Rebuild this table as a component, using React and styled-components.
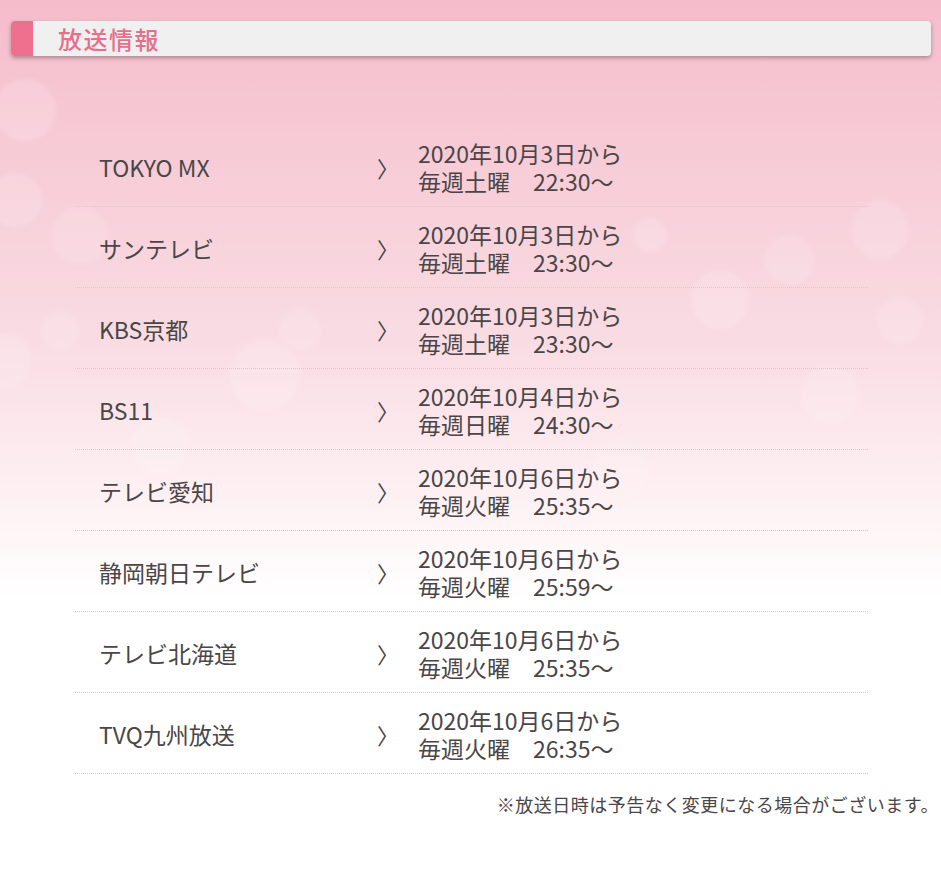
import React from 'react'
import styled, { createGlobalStyle } from 'styled-components';

const schedule = [
  { name: 'TOKYO MX', start: '2020年10月3日から', time: '毎週土曜　22:30〜' },
  { name: 'サンテレビ', start: '2020年10月3日から', time: '毎週土曜　23:30〜' },
  { name: 'KBS京都', start: '2020年10月3日から', time: '毎週土曜　23:30〜' },
  { name: 'BS11', start: '2020年10月4日から', time: '毎週日曜　24:30〜' },
  { name: 'テレビ愛知', start: '2020年10月6日から', time: '毎週火曜　25:35〜' },
  { name: '静岡朝日テレビ', start: '2020年10月6日から', time: '毎週火曜　25:59〜' },
  { name: 'テレビ北海道', start: '2020年10月6日から', time: '毎週火曜　25:35〜' },
  { name: 'TVQ九州放送', start: '2020年10月6日から', time: '毎週火曜　26:35〜' },
];

function App() {
  return (
    <>
      <GlobalStyle />
      <StyledPage>
        <TitleBar>
          <span className='tab' />
          <h2>放送情報</h2>
        </TitleBar>

        <List>
          {schedule.map((item) => (
            <Row key={item.name}>
              <Station>{item.name}</Station>
              <Chevron>〉</Chevron>
              <Dates>
                <span>{item.start}</span>
                <span>{item.time}</span>
              </Dates>
            </Row>
          ))}
        </List>

        <Note>※放送日時は予告なく変更になる場合がございます。</Note>
      </StyledPage>
    </>
  )
}

export default App


const bokeh = (x, y, r, a) =>
  `radial-gradient(circle at ${x}px ${y}px, rgba(255,255,255,${a}) 0, rgba(255,255,255,${a}) ${r - 6}px, rgba(255,255,255,0) ${r}px)`;

const GlobalStyle = createGlobalStyle`
  html, body {
    margin: 0;
    padding: 0;
  }
  body {
    min-height: 869px;
    font-family: 'Noto Sans CJK JP', 'Noto Sans', sans-serif;
    background:
      ${bokeh(25, 110, 34, 0.16)},
      ${bokeh(15, 200, 30, 0.14)},
      ${bokeh(80, 235, 32, 0.12)},
      ${bokeh(60, 330, 22, 0.12)},
      ${bokeh(5, 360, 30, 0.14)},
      ${bokeh(265, 375, 38, 0.14)},
      ${bokeh(300, 330, 24, 0.12)},
      ${bokeh(160, 445, 32, 0.12)},
      ${bokeh(650, 235, 20, 0.16)},
      ${bokeh(720, 300, 32, 0.16)},
      ${bokeh(790, 260, 28, 0.12)},
      ${bokeh(880, 230, 32, 0.14)},
      ${bokeh(900, 320, 26, 0.12)},
      ${bokeh(830, 395, 32, 0.12)},
      ${bokeh(620, 470, 32, 0.1)},
      linear-gradient(to bottom, #f5bccb 0px, #f7cbd6 150px, #f9dbe2 330px, #fdeef1 480px, #ffffff 600px, #ffffff 100%);
    background-repeat: no-repeat;
    background-color: #ffffff;
  }
`;

const StyledPage = styled.div`
  padding: 21px 10px 40px 11px;
`;

const TitleBar = styled.div`
  height: 35px;
  display: flex;
  align-items: center;
  background: #f0f0f0;
  border-radius: 4px;
  box-shadow: 0 2px 4px rgba(0,0,0,0.3);
  overflow: hidden;

  .tab{
    width: 22px;
    height: 100%;
    background: #ee6f8e;
  }

  h2{
    margin: 0 0 0 25px;
    font-size: 24px;
    font-weight: 500;
    color: #e66f8d;
    letter-spacing: 1.5px;
    line-height: 35px;
  }
`;

const List = styled.ul`
  list-style: none;
  margin: 70px 0 0 64px;
  padding: 0;
  width: 793px;
`;

const Row = styled.li`
  display: flex;
  align-items: center;
  padding: 1px 0 0 24px;
  box-sizing: border-box;
  height: 81px;
  border-bottom: 1px dotted #e6c2cb;
  color: #4a4647;
  font-size: 23px;
`;

const Station = styled.div`
  width: 278px;
  line-height: 28px;
`;

const Chevron = styled.div`
  width: 41px;
  font-size: 22px;
  line-height: 28px;
`;

const Dates = styled.div`
  display: flex;
  flex-direction: column;
  line-height: 28px;
`;

const Note = styled.p`
  margin: 17px -8px 0 0;
  text-align: right;
  font-size: 18px;
  letter-spacing: 0.5px;
  line-height: 26px;
  color: #4a4647;
`;
